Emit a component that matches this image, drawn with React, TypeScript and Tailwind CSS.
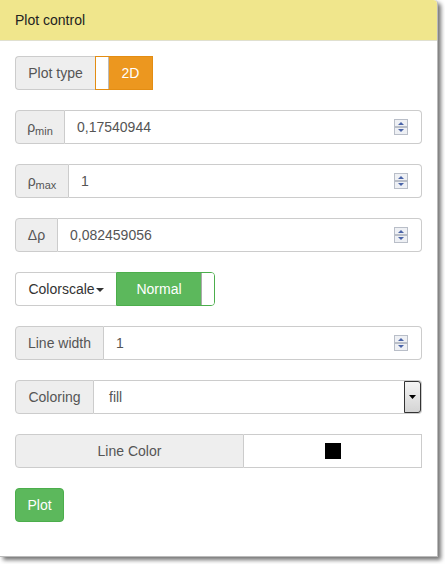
import React from 'react';

const font = { fontFamily: '"Liberation Sans", Arial, sans-serif' };

const Spinner = () => (
  <svg width="14" height="16" viewBox="0 0 14 16" className="shrink-0">
    <rect x="0.5" y="0.5" width="13" height="7" fill="#eef0f4" stroke="#b9bec8" />
    <rect x="0.5" y="8.5" width="13" height="7" fill="#eef0f4" stroke="#b9bec8" />
    <path d="M4 6 L7 3 L10 6 Z" fill="#4a64a8" />
    <path d="M4 10 L7 13 L10 10 Z" fill="#4a64a8" />
  </svg>
);

const NumberRow = ({ label, value, addonW }: { label: React.ReactNode; value: string; addonW: string }) => (
  <div className="flex h-[34px] mb-[20px]">
    <span
      className={`${addonW} shrink-0 flex items-center justify-center bg-[#eee] border border-[#ccc] rounded-l-[4px] text-[#555] text-[14px]`}
    >
      {label}
    </span>
    <div className="flex-1 flex items-center border border-l-0 border-[#ccc] rounded-r-[4px] pl-[12px] pr-[13px] text-[#555] text-[14px]">
      <span className="flex-1">{value}</span>
      <Spinner />
    </div>
  </div>
);

const Rho = ({ sub }: { sub: string }) => (
  <span className="flex items-end">
    <span className="text-[14px]">ρ</span>
    <span className="text-[11px] leading-[14px] mt-[4px]">{sub}</span>
  </span>
);

export default function App() {
  return (
    <div className="w-[445px] h-[564px] bg-white" style={font}>
      <div className="w-[438px] h-[557px] bg-white border-r border-b border-[#bbb] rounded-tr-[4px] shadow-[3px_3px_4px_rgba(0,0,0,0.55)] flex flex-col">
        <div className="h-[41px] bg-[#f0e68c] border-b border-[#e0e0d0] rounded-tr-[4px] px-[15px] flex items-center text-[14px] text-[#222]">
          Plot control
        </div>
        <div className="px-[15px] pt-[15px] text-[14px]">
          {/* Plot type */}
          <div className="flex h-[34px] mb-[20px]">
            <span className="w-[80px] flex items-center justify-center bg-[#eee] border border-r-0 border-[#ccc] rounded-l-[4px] text-[#555]">
              Plot type
            </span>
            <div className="flex border border-[#e38d13] overflow-hidden">
              <span className="w-[13px] bg-white border-r border-[#bbb]" />
              <span className="w-[43px] bg-[#ec971f] text-white flex items-center justify-center">2D</span>
            </div>
          </div>

          <NumberRow label={<Rho sub="min" />} value="0,17540944" addonW="w-[50px]" />
          <NumberRow label={<Rho sub="max" />} value="1" addonW="w-[54px]" />
          <NumberRow label="Δρ" value="0,082459056" addonW="w-[43px]" />

          {/* Colorscale */}
          <div className="flex h-[34px] mb-[20px]">
            <span className="w-[101px] flex items-center justify-center bg-white border border-r-0 border-[#ccc] rounded-l-[4px] text-[#333]">
              Colorscale
              <svg width="8" height="5" viewBox="0 0 8 5" className="ml-[1px] mt-[2px]">
                <path d="M0 0 L8 0 L4 4 Z" fill="#333" />
              </svg>
            </span>
            <div className="flex border border-[#4cae4c] rounded-r-[4px] overflow-hidden">
              <span className="w-[85px] bg-[#5cb85c] text-white flex items-center justify-center border-r border-[#aaa]">
                Normal
              </span>
              <span className="w-[12px] bg-white" />
            </div>
          </div>

          <NumberRow label="Line width" value="1" addonW="w-[89px]" />

          {/* Coloring */}
          <div className="flex h-[34px] mb-[20px]">
            <span className="w-[79px] shrink-0 flex items-center justify-center bg-[#eee] border border-[#ccc] rounded-l-[4px] text-[#555]">
              Coloring
            </span>
            <div className="flex-1 flex items-center border border-l-0 border-[#ccc] rounded-r-[4px] pl-[15px] text-[#555]">
              <span className="flex-1">fill</span>
              <span className="w-[17px] h-[32px] flex items-center justify-center border border-[#333] bg-gradient-to-b from-[#f4f4f4] to-[#d4d4d4] rounded-r-[3px]">
                <svg width="7" height="4" viewBox="0 0 7 4">
                  <path d="M0 0 L7 0 L3.5 4 Z" fill="#000" />
                </svg>
              </span>
            </div>
          </div>

          {/* Line Color */}
          <div className="flex h-[34px] mb-[20px]">
            <span className="w-[229px] flex items-center justify-center bg-[#eee] border border-[#ccc] rounded-l-[4px] text-[#555]">
              Line Color
            </span>
            <div className="flex-1 flex items-center justify-center border border-l-0 border-[#ccc]">
              <span className="w-[16px] h-[16px] bg-black" />
            </div>
          </div>

          <button className="h-[34px] w-[49px] bg-[#5cb85c] border border-[#4cae4c] rounded-[4px] text-white text-[14px]">
            Plot
          </button>
        </div>
      </div>
    </div>
  );
}
